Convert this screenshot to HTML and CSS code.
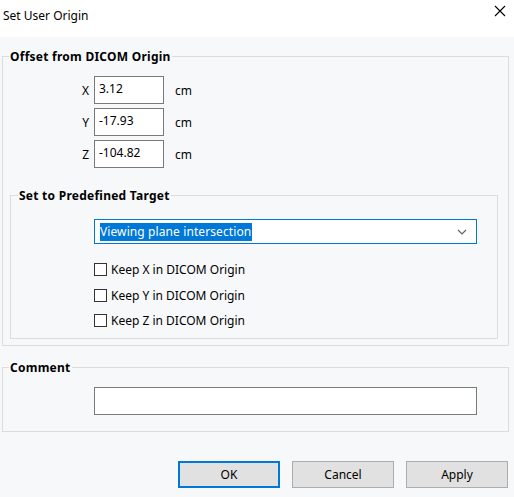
FILE: index.html
```html
<!DOCTYPE html>
<html>
<head>
<meta charset="utf-8">
<link rel="stylesheet" href="styles.css">
</head>
<body>
<div class="dialog">
  <div class="titlebar">
    <span class="title">Set User Origin</span>
    <svg class="close" width="12" height="12" viewBox="0 0 12 12"><path d="M1 1L11 11M11 1L1 11" stroke="#000" stroke-width="1.1" fill="none"/></svg>
  </div>
  <div class="content">
    <fieldset class="group outer">
      <legend>Offset from DICOM Origin</legend>
      <div class="coords">
        <div class="coord-row"><span class="axis">X</span><div class="field">3.12</div><span class="unit">cm</span></div>
        <div class="coord-row"><span class="axis">Y</span><div class="field">-17.93</div><span class="unit">cm</span></div>
        <div class="coord-row"><span class="axis">Z</span><div class="field">-104.82</div><span class="unit">cm</span></div>
      </div>
      <fieldset class="group inner">
        <legend>Set to Predefined Target</legend>
        <div class="inner-body">
          <div class="select">
            <span class="sel-text">Viewing plane intersection</span>
            <svg class="chev" width="10" height="6" viewBox="0 0 10 6"><path d="M1 1L5 5L9 1" stroke="#606060" stroke-width="1.2" fill="none"/></svg>
          </div>
          <div class="checks">
            <div class="check"><span class="box"></span><span>Keep X in DICOM Origin</span></div>
            <div class="check"><span class="box"></span><span>Keep Y in DICOM Origin</span></div>
            <div class="check"><span class="box"></span><span>Keep Z in DICOM Origin</span></div>
          </div>
        </div>
      </fieldset>
    </fieldset>
    <fieldset class="group comment">
      <legend>Comment</legend>
      <div class="comment-body">
        <div class="comment-field"></div>
      </div>
    </fieldset>
    <div class="buttons">
      <div class="btn default">OK</div>
      <div class="btn">Cancel</div>
      <div class="btn">Apply</div>
    </div>
  </div>
</div>
</body>
</html>
```
FILE: styles.css
```css
* { box-sizing: border-box; }
html, body { margin: 0; padding: 0; }
body {
  width: 514px;
  height: 497px;
  overflow: hidden;
  font-family: "Noto Sans", "Open Sans", sans-serif;
  font-size: 12px;
  color: #000;
  background: #f7f8fa;
}
.titlebar {
  height: 37px;
  background: #fff;
  display: flex;
  align-items: flex-start;
  justify-content: space-between;
}
.title {
  margin: 7px 0 0 3px;
  line-height: 18px;
}
.close { margin: 5px 8px 0 0; }
.content {
  padding: 11px 5px 0 2px;
}
.group {
  margin: 0;
  padding: 0;
  border: 1px solid #dcdcdc;
  min-width: 0;
}
.group legend {
  font-weight: bold;
  line-height: 17px;
  padding: 0 1px;
  margin-left: 6px;
  letter-spacing: 0.25px;
}
.outer { padding-bottom: 6px; }
.coords {
  padding-top: 11px;
  display: flex;
  flex-direction: column;
  gap: 4px;
}
.coord-row {
  display: flex;
  align-items: center;
  height: 28px;
}
.axis {
  width: 86px;
  text-align: right;
}
.field {
  margin-left: 5px;
  width: 70px;
  height: 28px;
  border: 1px solid #7a7a7a;
  background: #fff;
  padding: 3px 0 0 4px;
  line-height: 18px;
}
.unit { margin-left: 11px; }
.inner {
  margin: 19px 10px 0 7px;
}
.inner legend { margin-left: 7px; }
.inner-body {
  padding: 15px 0 11px 83px;
}
.select {
  width: 383px;
  height: 25px;
  border: 1px solid #0078d7;
  background: #fff;
  display: flex;
  align-items: center;
  justify-content: space-between;
  padding: 0 9px 0 5px;
}
.sel-text {
  background: #0078d7;
  color: #fff;
  line-height: 18px;
  padding-right: 1px;
  letter-spacing: 0.1px;
}
.checks {
  margin-top: 19px;
  display: flex;
  flex-direction: column;
  gap: 12.5px;
}
.check {
  display: flex;
  align-items: center;
  height: 13px;
  gap: 4px;
}
.box {
  width: 13px;
  height: 13px;
  border: 1px solid #333;
  background: #fff;
}
.comment {
  margin-top: 13px;
}
.comment-body {
  padding: 11px 0 16px 91px;
}
.comment-field {
  width: 383px;
  height: 28px;
  border: 1px solid #7a7a7a;
  background: #fff;
}
.buttons {
  margin-top: 29px;
  display: flex;
  justify-content: flex-end;
  gap: 12px;
  padding-right: 1px;
}
.btn {
  width: 102px;
  height: 27px;
  background: #e1e1e1;
  border: 1px solid #adadad;
  display: flex;
  align-items: center;
  justify-content: center;
}
.btn.default { border: 2px solid #0078d7; }
```
